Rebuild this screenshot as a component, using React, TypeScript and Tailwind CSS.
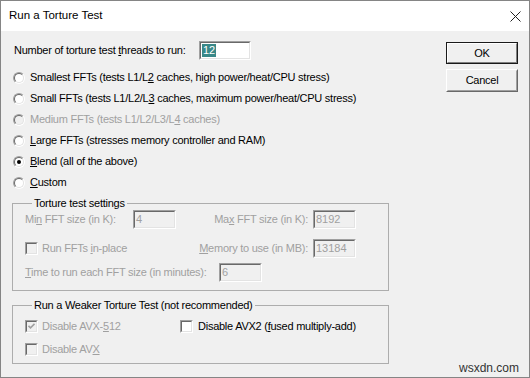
import React from 'react'

// classic win32 sunken edge (edit boxes, check boxes)
function Sunken({className = "", inner = "", children}: {className?: string, inner?: string, children?: React.ReactNode}) {
  return (
    <div className={`shrink-0 border border-t-[#a0a0a0] border-l-[#a0a0a0] border-b-white border-r-white ${className}`}>
      <div className={`h-full w-full border border-t-[#696969] border-l-[#696969] border-b-[#e3e3e3] border-r-[#e3e3e3] ${inner}`}>
        {children}
      </div>
    </div>
  )
}

function Field({value, width = "w-[43px]"}: {value: string, width?: string}) {
  return (
    <Sunken className={`h-[19px] ${width}`} inner="flex items-center bg-[#f0f0f0] pl-[1px] text-[#a0a0a0] leading-none tracking-normal">
      {value}
    </Sunken>
  )
}

function Radio({checked, disabled}: {checked?: boolean, disabled?: boolean}) {
  return (
    <span className="flex h-[12px] w-[12px] shrink-0 rounded-full border border-t-[#a0a0a0] border-l-[#a0a0a0] border-b-white border-r-white">
      <span className={`flex h-full w-full items-center justify-center rounded-full border border-t-[#696969] border-l-[#696969] border-b-[#e3e3e3] border-r-[#e3e3e3] ${disabled ? "bg-[#f0f0f0]" : "bg-white"}`}>
        {checked && <span className="h-[4px] w-[4px] rounded-full bg-black" />}
      </span>
    </span>
  )
}

function Check({checked, disabled}: {checked?: boolean, disabled?: boolean}) {
  return (
    <Sunken className="h-[13px] w-[13px]" inner={`flex items-center justify-center ${disabled ? "bg-[#f0f0f0]" : "bg-white"}`}>
      {checked && (
        <svg width="7" height="7" viewBox="0 0 7 7">
          <path d="M0.5 2.8 L2.5 4.8 L6.5 0.8" fill="none" stroke={disabled ? "#a0a0a0" : "#000"} strokeWidth="1.6" />
        </svg>
      )}
    </Sunken>
  )
}

const radios = [
  {label: <>Smallest FFTs (tests L1/L<u>2</u> caches, high power/heat/CPU stress)</>},
  {label: <>Small FFTs (tests L1/L2/L<u>3</u> caches, maximum power/heat/CPU stress)</>},
  {label: <>Medium FFTs (tests L1/L2/L3/L<u>4</u> caches)</>, disabled: true},
  {label: <><u>L</u>arge FFTs (stresses memory controller and RAM)</>},
  {label: <><u>B</u>lend (all of the above)</>, checked: true},
  {label: <><u>C</u>ustom</>},
]

const App = () => {
  return (
    <div className="flex h-[378px] w-[530px] flex-col overflow-hidden border border-[#858585] bg-[#f0f0f0] font-['Liberation_Sans',Arial,sans-serif] text-[11px] tracking-[-0.25px] text-black">
      {/* title bar */}
      <div className="flex h-[30px] shrink-0 items-center justify-between bg-white pl-[8px] pr-[8px] tracking-normal">
        <span className="text-[11.5px]">Run a Torture Test</span>
        <svg width="11" height="11" viewBox="0 0 11 11">
          <path d="M0.5 0.5 L10.5 10.5 M10.5 0.5 L0.5 10.5" stroke="#222" strokeWidth="1" />
        </svg>
      </div>

      <div className="relative flex flex-1">
        <div className="flex flex-1 flex-col whitespace-nowrap pl-[12px] pt-[10px]">
          <div className="flex h-[19px] items-center">
            <span className="w-[186px] pl-[1px]">Number of torture test <u>t</u>hreads to run:</span>
            <Sunken className="h-[19px] w-[52px]" inner="flex items-center bg-white pl-[1px] leading-none tracking-normal">
              <span className="bg-[#398888] px-[1px] py-[1px] text-white">12</span>
            </Sunken>
          </div>

          <div className="mt-[7px] flex flex-col">
            {radios.map((r, i) => (
              <div key={i} className={`flex h-[21px] items-center gap-[5px] ${r.disabled ? "text-[#a0a0a0]" : ""}`}>
                <Radio checked={r.checked} disabled={r.disabled} />
                <span>{r.label}</span>
              </div>
            ))}
          </div>

          <fieldset className="-ml-[1px] mt-[3px] w-[377px] border border-[#adadad] pb-[8px] pl-[12px]">
            <legend className="ml-[7px] px-[2px] leading-[14px]">Torture test settings</legend>
            <div className="flex h-[19px] items-center text-[#a0a0a0]">
              <span className="w-[108px]">Mi<u>n</u> FFT size (in K):</span>
              <Field value="4" />
              <span className="w-[137px] pr-[5px] text-right">Ma<u>x</u> FFT size (in K):</span>
              <Field value="8192" />
            </div>
            <div className="mt-[10px] flex h-[19px] items-center text-[#a0a0a0]">
              <div className="flex w-[288px] items-center justify-between pr-[5px]">
                <span className="flex items-center gap-[4px]">
                  <Check disabled />
                  <span>Run FFTs <u>i</u>n-place</span>
                </span>
                <span><u>M</u>emory to use (in MB):</span>
              </div>
              <Field value="13184" />
            </div>
            <div className="mt-[5px] flex h-[19px] items-center text-[#a0a0a0]">
              <span className="w-[194px]"><u>T</u>ime to run each FFT size (in minutes):</span>
              <Field value="6" />
            </div>
          </fieldset>

          <fieldset className="-ml-[1px] mt-[7px] w-[377px] border border-[#adadad] pb-[5px] pl-[12px] pt-[6px]">
            <legend className="ml-[7px] px-[2px] leading-[14px]">Run a Weaker Torture Test (not recommended)</legend>
            <div className="flex h-[17px] items-center">
              <div className="flex w-[155px] items-center gap-[4px] text-[#a0a0a0]">
                <Check checked disabled />
                <span>Disable AVX-<u>5</u>12</span>
              </div>
              <div className="flex items-center gap-[5px]">
                <Check />
                <span>Disable AVX2 (<u>f</u>used multiply-add)</span>
              </div>
            </div>
            <div className="mt-[6px] flex h-[17px] items-center gap-[4px] text-[#a0a0a0]">
              <Check disabled />
              <span>Disable AV<u>X</u></span>
            </div>
          </fieldset>
        </div>

        <div className="mr-[11px] mt-[11px] flex w-[72px] flex-col gap-[5px]">
          <div className="h-[22px] border border-[#1a1a1a]">
            <div className="flex h-full w-full items-center justify-center border border-t-white border-l-white border-b-[#808080] border-r-[#808080]">OK</div>
          </div>
          <div className="h-[23px] border border-t-white border-l-white border-b-[#696969] border-r-[#696969]">
            <div className="flex h-full w-full items-center justify-center border border-t-[#f0f0f0] border-l-[#f0f0f0] border-b-[#a0a0a0] border-r-[#a0a0a0]">Cancel</div>
          </div>
        </div>

        <span className="absolute bottom-[2px] right-[10px] text-[12px] leading-[14px] tracking-normal text-[#333]">wsxdn.com</span>
      </div>
    </div>
  )
}

export default App
